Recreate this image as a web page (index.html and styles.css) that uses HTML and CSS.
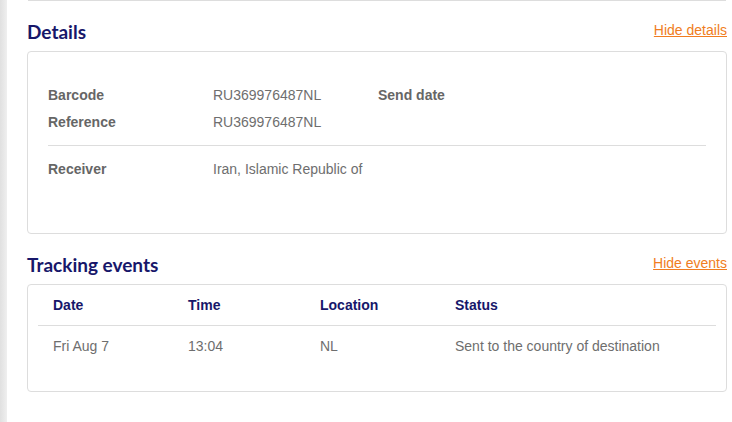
FILE: index.html
```html
<!DOCTYPE html>
<html lang="en">

<head>
  <meta charset="UTF-8">
  <meta name="viewport" content="width=device-width, initial-scale=1.0">
  <title>Track and trace</title>
  <link rel="stylesheet" href="styles.css">
</head>

<body>
  <div class="strip"></div>
  <main class="main">
    <div class="prev-card"></div>

    <div class="section-head">
      <h2>Details</h2>
      <a href="javascript:;">Hide details</a>
    </div>
    <div class="card details">
      <div class="row">
        <span class="label">Barcode</span>
        <span class="value">RU369976487NL</span>
        <span class="label">Send date</span>
      </div>
      <div class="row">
        <span class="label">Reference</span>
        <span class="value">RU369976487NL</span>
        <span></span>
      </div>
      <hr>
      <div class="row">
        <span class="label">Receiver</span>
        <span class="value">Iran, Islamic Republic of</span>
        <span></span>
      </div>
    </div>

    <div class="section-head">
      <h2>Tracking events</h2>
      <a href="javascript:;">Hide events</a>
    </div>
    <div class="card events">
      <div class="ev-row ev-head">
        <span>Date</span>
        <span>Time</span>
        <span>Location</span>
        <span>Status</span>
      </div>
      <div class="ev-row">
        <span>Fri Aug 7</span>
        <span>13:04</span>
        <span>NL</span>
        <span>Sent to the country of destination</span>
      </div>
    </div>
  </main>
</body>

</html>
```

FILE: styles.css
```css
* {
  padding: 0;
  margin: 0;
  box-sizing: border-box;
}

body {
  display: flex;
  min-height: 100vh;
  background-color: #fff;
  font-family: "Liberation Sans", Arial, sans-serif;
  font-size: 14px;
  color: #666;
}

.strip {
  width: 7px;
  flex-shrink: 0;
  background: linear-gradient(to right, #e0e0e0, #efefef);
}

.main {
  flex: 1;
  padding: 0 5px 0 20px;
}

.prev-card {
  height: 1px;
  margin: 0 1px;
  border-bottom: 1px solid #ddd;
}

.section-head {
  display: flex;
  justify-content: space-between;
  align-items: center;
  margin-top: 20px;
  margin-bottom: 8px;
}

.section-head h2 {
  font-family: Lato, "Open Sans", sans-serif;
  font-size: 19px;
  line-height: 22px;
  font-weight: 700;
  color: #17176a;
}

.section-head a {
  color: #f07d22;
  text-decoration: underline;
  font-size: 14px;
  line-height: 17px;
  margin-bottom: 3px;
}

.card {
  border: 1px solid #ddd;
  border-radius: 4px;
}

.details {
  padding: 30px 20px 50px 20px;
}

.row {
  display: grid;
  grid-template-columns: 165px 165px 1fr;
  line-height: 27px;
}

.label {
  font-weight: 700;
  color: #666;
}

.value {
  color: #6e6e6e;
}

.details hr {
  border: none;
  border-top: 1px solid #ddd;
  margin: 9px 0 10px;
}

.events {
  padding: 0 10px 25px;
}

.ev-row {
  display: grid;
  grid-template-columns: 135px 132px 135px 1fr;
  line-height: 40px;
  color: #6e6e6e;
}

.ev-row span {
  padding-left: 15px;
}

.ev-head {
  border-bottom: 1px solid #ddd;
  font-weight: 700;
  color: #17176a;
}
```
